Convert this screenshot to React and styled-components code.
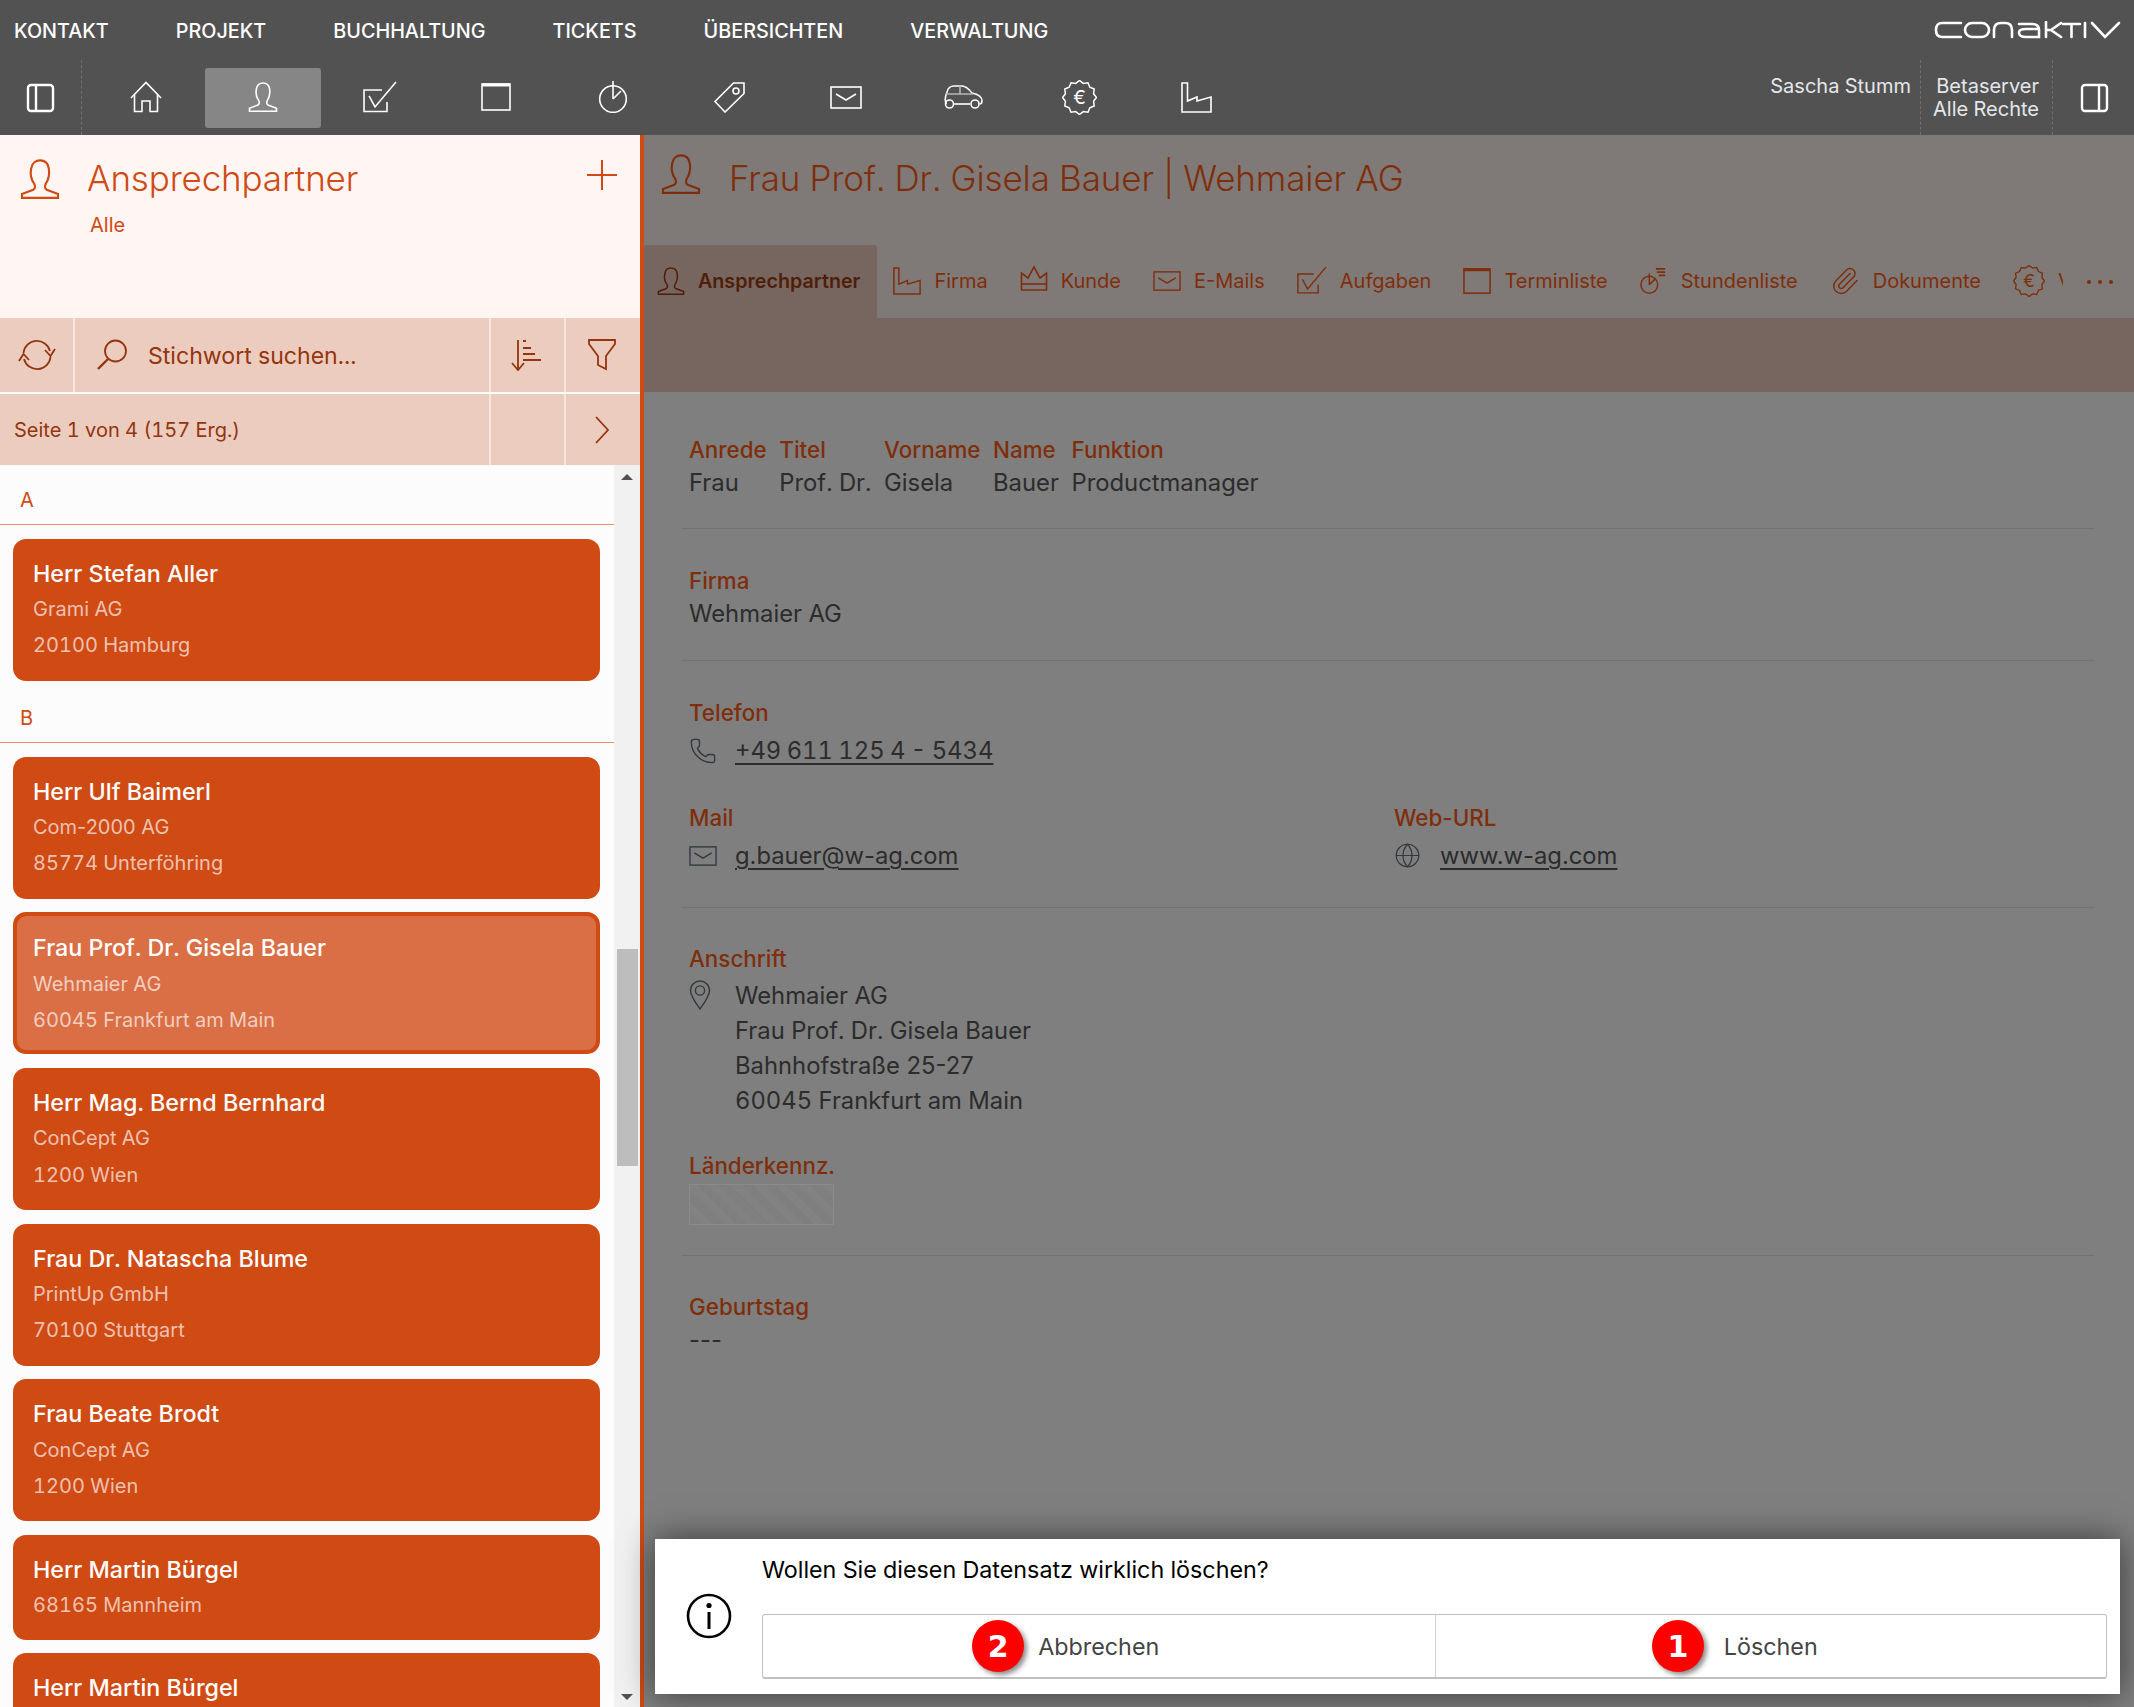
import React from 'react';
import styled, {createGlobalStyle} from 'styled-components';
import {Paperclip, Phone, Globe} from 'lucide-react';

const GlobalStyle = createGlobalStyle`
  html, body {
    margin: 0;
    padding: 0;
    background: #7f7f7f;
  }
  * {
    box-sizing: border-box;
  }
  body {
    font-family: Inter, "Noto Sans", "Liberation Sans", sans-serif;
    font-variant-numeric: tabular-nums;
  }
`;

const ORANGE = '#d04a14';
const DIM_LABEL = '#7f2e0c';

const Page = styled.div`
  width: 100vw;
  height: 100vh;
  display: flex;
  flex-direction: column;
  overflow: hidden;
`;

const Plain = styled.span`
  font-variant-numeric: normal;
`;

/* top bar */
const TopBar = styled.header`
  height: 135px;
  flex: none;
  background: #525252;
  display: flex;
  justify-content: space-between;
  color: #fff;
`;

const TopLeft = styled.div`
  display: flex;
  flex-direction: column;
`;

const TopRight = styled.div`
  display: flex;
  flex-direction: column;
  align-items: flex-end;
`;

const Menu = styled.nav`
  height: 60px;
  padding: 1px 0 0 14px;
  display: flex;
  align-items: center;
  gap: 67px;
`;

const MenuItem = styled.span`
  font-size: 19.8px;
  font-weight: 500;
  color: #fff;
`;

const IconRow = styled.div`
  height: 75px;
  display: flex;
`;

const ToggleCell = styled.div`
  width: 82px;
  height: 75px;
  display: flex;
  align-items: center;
  padding-left: 26px;
  border-right: 1px dashed #6f6f6f;
  margin-right: 6px;
`;

const IconButton = styled.div`
  width: 116.7px;
  height: 60px;
  margin-top: 8px;
  padding-bottom: 2px;
  display: flex;
  align-items: center;
  justify-content: center;
  border-radius: 3px;
  background: ${(p) => (p.$active ? '#868686' : 'transparent')};
`;

const LogoBox = styled.div`
  height: 60px;
  padding: 21px 13px 0 0;
`;

const MetaRow = styled.div`
  height: 75px;
  display: flex;
  font-size: 20px;
  line-height: 23px;
  color: #e4e7ea;
`;

const UserName = styled.div`
  padding: 15px 9px 0 0;
`;

const MetaBlock = styled.div`
  text-align: right;
  padding: 15px 13px 0 12px;
  border-left: 1px dashed #6f6f6f;
  border-right: 1px dashed #6f6f6f;
`;

const RightToggle = styled.div`
  width: 81px;
  padding: 23px 0 0 27px;
  color: #fff;
`;

/* main area */
const Main = styled.main`
  flex: 1;
  min-height: 0;
  display: flex;
`;

const Sidebar = styled.aside`
  width: 644px;
  flex: none;
  display: flex;
  flex-direction: column;
  border-right: 4px solid ${ORANGE};
  background: #fcfcfc;
  min-height: 0;
`;

const SideHeader = styled.div`
  height: 183px;
  flex: none;
  background: #fff5f2;
  color: ${ORANGE};
  padding: 21px 23px 0 20px;
  display: grid;
  grid-template-columns: 67px 1fr 30px;
  grid-template-rows: 45px auto;
  align-content: start;
  align-items: center;
`;

const SideTitle = styled.h1`
  margin: 0;
  font-size: 35px;
  font-weight: 300;
  letter-spacing: -0.15px;
  line-height: 45px;
`;

const PlusSlot = styled.div`
  margin-bottom: 7px;
`;

const SideSub = styled.div`
  grid-column: 2;
  padding: 12px 0 0 3px;
  font-size: 20px;
  line-height: 24px;
`;

const ToolRow = styled.div`
  display: grid;
  grid-template-columns: ${(p) => p.$cols};
  height: ${(p) => p.$h}px;
  flex: none;
  gap: 2px;
  background: #f6e6df;
  margin-bottom: ${(p) => p.$mb || 0}px;
`;

const ToolCell = styled.div`
  background: #ecccbf;
  color: #93350e;
  display: flex;
  align-items: center;
  justify-content: center;
  padding-right: ${(p) => p.$pr || 0}px;
`;

const SearchCell = styled(ToolCell)`
  justify-content: flex-start;
  padding-left: 21px;
  gap: 20px;
  font-size: 23.1px;
`;

const SearchText = styled.span`
  padding-top: 2px;
`;

const PagerCell = styled(ToolCell)`
  justify-content: flex-start;
  padding-left: 14px;
  font-size: 20px;
`;

const ListArea = styled.div`
  flex: 1;
  min-height: 0;
  display: flex;
  overflow: hidden;
`;

const List = styled.div`
  flex: 1;
  display: flex;
  flex-direction: column;
  gap: 13.6px;
  padding-top: 11px;
`;

const GroupHead = styled.div`
  flex: none;
  height: 49px;
  padding: 12px 0 0 20px;
  font-size: 20px;
  line-height: 24px;
  color: ${ORANGE};
  border-bottom: 1px solid #ec8e6d;
`;

const Card = styled.div`
  flex: none;
  margin: 0 14px 0 13px;
  height: ${(p) => (p.$short ? 105 : 142)}px;
  border-radius: 13px;
  background: ${(p) => (p.$selected ? '#da6e44' : ORANGE)};
  border: ${(p) => (p.$selected ? `4px solid ${ORANGE}` : 'none')};
  padding: ${(p) => (p.$selected ? '17px 16px' : '20px 20px')};
`;

const CardName = styled.div`
  font-size: 23.3px;
  font-weight: 500;
  line-height: 30px;
  color: #fff;
`;

const CardLine = styled.div`
  font-size: 20px;
  line-height: 36.3px;
  margin-top: ${(p) => (p.$first ? 2.4 : 0)}px;
  color: rgba(255, 255, 255, 0.68);
`;

const Track = styled.div`
  width: 26px;
  flex: none;
  background: #f1f1f1;
  display: flex;
  flex-direction: column;
  align-items: center;
  padding: 9px 0 7px;
`;

const ArrowUp = styled.div`
  border: 6px solid transparent;
  border-top: 0;
  border-bottom: 6px solid #505050;
`;

const ArrowDown = styled.div`
  border: 6px solid transparent;
  border-bottom: 0;
  border-top: 6px solid #505050;
  margin-top: auto;
`;

const Thumb = styled.div`
  width: 21px;
  height: 217px;
  margin-top: 469px;
  background: #bdbdbd;
`;

/* detail side */
const Detail = styled.section`
  flex: 1;
  min-width: 0;
  position: relative;
  display: flex;
  flex-direction: column;
  background: #7f7f7f;
`;

const DetailHeader = styled.div`
  height: 110px;
  flex: none;
  background: #7f7a77;
  color: ${DIM_LABEL};
  padding: 19px 0 0 17px;
  display: flex;
  align-items: flex-start;
  gap: 28px;
`;

const DetailTitle = styled.h2`
  margin: 2px 0 0;
  font-size: 35px;
  font-weight: 300;
  letter-spacing: -0.12px;
  line-height: 45px;
`;

const TabBar = styled.div`
  height: 73px;
  flex: none;
  background: #7f7a77;
  display: flex;
  align-items: stretch;
`;

const TabStrip = styled.div`
  width: 1419px;
  display: flex;
  overflow: hidden;
`;

const Tab = styled.div`
  flex: none;
  display: flex;
  align-items: center;
  gap: 13px;
  padding: ${(p) => (p.$active ? '0 17px 2px 13px' : '0 16px 2px')};
  font-size: ${(p) => (p.$active ? 19.7 : 20)}px;
  font-weight: ${(p) => (p.$active ? 600 : 400)};
  color: ${(p) => (p.$active ? '#4f1e0a' : DIM_LABEL)};
  background: ${(p) => (p.$active ? '#76665f' : 'transparent')};
  border-radius: 3px 3px 0 0;
`;

const MoreDots = styled.div`
  margin-left: 24px;
  align-self: center;
  color: ${DIM_LABEL};
  display: flex;
  gap: 7px;
`;

const Dot = styled.i`
  width: 4px;
  height: 4px;
  border-radius: 50%;
  background: currentColor;
`;

const Band = styled.div`
  height: 74px;
  flex: none;
  background: #76665f;
`;

const Body = styled.div`
  padding: 7px 40px 0 38px;
`;

const Section = styled.div`
  padding: ${(p) => p.$pt || 36}px 0 ${(p) => p.$pb}px 7px;
  border-bottom: ${(p) => (p.$last ? 'none' : '1px solid #737373')};
`;

const NameGrid = styled.div`
  display: inline-grid;
  grid-template-columns: repeat(5, auto);
  column-gap: 12.6px;
`;

const Label = styled.div`
  font-size: 22.4px;
  font-weight: 500;
  line-height: 30px;
  color: ${DIM_LABEL};
`;

const Value = styled.div`
  font-size: 23.8px;
  line-height: 35px;
  color: #2c2c2c;
`;

const ContactGrid = styled.div`
  display: grid;
  grid-template-columns: 705px 1fr;
`;

const ContactRow = styled.div`
  display: flex;
  align-items: center;
  margin: 5px 0 ${(p) => p.$mb || 0}px;
`;

const IconSlot = styled.div`
  width: 46px;
  flex: none;
  display: flex;
  color: #33393c;
`;

const ValueLink = styled.a`
  font-size: 23.8px;
  line-height: 35px;
  color: #2c2c2c;
  word-spacing: ${(p) => p.$ws || 0}px;
  text-decoration: underline;
  text-underline-offset: 4px;
`;

const AddressRow = styled.div`
  display: flex;
  align-items: flex-start;
  margin: 4px 0 33px;
`;

const PinSlot = styled(IconSlot)`
  padding-top: 2px;
`;

const HatchBox = styled.div`
  width: 145px;
  height: 41px;
  margin-top: 3px;
  border: 1px solid #8a8a8a;
  background: repeating-linear-gradient(45deg, #7f7f7f 0 8px, #828282 8px 16px);
`;

/* confirmation dialog */
const Dialog = styled.div`
  position: absolute;
  left: 11px;
  right: 14px;
  bottom: 13px;
  height: 155px;
  background: #fff;
  box-shadow: 0 0 32px rgba(0, 0, 0, 0.55);
  display: flex;
  padding: 0 13px 0 31px;
`;

const InfoSlot = styled.div`
  width: 76px;
  flex: none;
  padding-top: 54px;
  color: #000;
`;

const DialogMain = styled.div`
  flex: 1;
  display: flex;
  flex-direction: column;
`;

const Question = styled.div`
  font-size: 23.3px;
  line-height: 30px;
  padding-top: 16px;
  color: #000;
`;

const ButtonGroup = styled.div`
  margin-top: 29px;
  height: 65px;
  display: grid;
  grid-template-columns: 1fr 1fr;
  border: 1px solid #c0c0c0;
  border-bottom-width: 2px;
  border-radius: 3px;
`;

const DialogButton = styled.div`
  display: flex;
  align-items: center;
  justify-content: center;
  font-size: 23.3px;
  color: #444;
  border-left: ${(p) => (p.$divided ? '1px solid #d0d0d0' : 'none')};
`;

const ButtonLabel = styled.span`
  position: relative;
`;

const Badge = styled.span`
  position: absolute;
  right: 100%;
  top: 50%;
  margin-right: ${(p) => p.$gap}px;
  width: 52px;
  height: 52px;
  margin-top: -26px;
  border-radius: 50%;
  background: #f00;
  color: #fff;
  font-family: "DejaVu Sans", sans-serif;
  font-size: 30px;
  font-weight: 700;
  display: flex;
  align-items: center;
  justify-content: center;
  box-shadow: 3px 3px 5px rgba(0, 0, 0, 0.45);
`;

/* icons */
const Ico = ({w, h, vw, vh, sw = 1.6, children}) => (
  <svg
    width={w}
    height={h}
    viewBox={`0 0 ${vw || w} ${vh || h}`}
    fill="none"
    stroke="currentColor"
    strokeWidth={sw}
    style={{display: 'block', flex: 'none'}}
  >
    {children}
  </svg>
);

const UserIcon = ({s = 30, sw}) => (
  <Ico w={s} h={s} vw={30} vh={30} sw={sw}>
    <path d="M1.5 29.2V26.2L10 23C11.6 22 11.6 20.4 10.6 18.4C8 15 7.6 11 8.4 7C9 3 12 1 15 1C18.4 1 21 3 21.6 7C22.2 11 21.6 15 19.4 18.4C18.4 20.4 18.4 22 20 23L28.5 26.2V29.2Z" />
  </Ico>
);

const HomeIcon = () => (
  <Ico w={32} h={32}>
    <path d="M1 17L16 1.5L31 17" />
    <path d="M4.5 13.5V30.5H12V20H20V30.5H27.5V13.5" />
  </Ico>
);

const CheckIcon = ({s = 34, sw}) => (
  <Ico w={s} h={s * 0.94} vw={34} vh={32} sw={sw}>
    <path d="M19 9H1V30.5H24V21" />
    <path d="M6 15L12 26L33 1" />
  </Ico>
);

const CalendarIcon = ({s = 30}) => (
  <Ico w={s} h={s} vw={30} vh={30}>
    <rect x="1" y="2" width="28" height="26" />
    <path d="M1 3H29" strokeWidth="3" />
  </Ico>
);

const WatchIcon = ({s = 30}) => (
  <Ico w={s} h={s * 1.07} vw={30} vh={32}>
    <circle cx="15" cy="18" r="13.3" />
    <path d="M15 0V18M15 18L23 10" />
  </Ico>
);

const WatchListIcon = ({s = 30}) => (
  <Ico w={s} h={s} vw={30} vh={30}>
    <circle cx="10" cy="19" r="9" />
    <path d="M10 7V19M10 19L16 13" />
    <path d="M17 2H27M18 5.5H27M20 9H27" strokeWidth="1.8" />
  </Ico>
);

const TagIcon = () => (
  <Ico w={31} h={31}>
    <path d="M1 19.5L19.5 1H30V11.5L11 30Z" />
    <circle cx="22" cy="9" r="3" />
  </Ico>
);

const MailIcon = ({w = 32, h = 23}) => (
  <Ico w={w} h={h} vw={32} vh={23}>
    <rect x="1" y="1" width="30" height="21" />
    <path d="M6 8L16 14L26 8" />
  </Ico>
);

const CarIcon = () => (
  <Ico w={39} h={24}>
    <path d="M2.5 19C1 17 1 12 3 7C4 3 6 1 10 1H18C21 1 24 3 28 8C33 9 38 11 38 16C38 18 37 19 35.5 19" />
    <path d="M10 19H26" />
    <circle cx="5.5" cy="19" r="4" />
    <circle cx="31" cy="19" r="4" />
    <path d="M2 9H29M16 1V9" stroke="#b5b5b5" />
  </Ico>
);

const badgePoints = Array.from({length: 24}, (_, i) => {
  const a = (i / 24) * Math.PI * 2;
  const r = i % 2 ? 14.6 : 17;
  return `${(17.5 + r * Math.sin(a)).toFixed(1)},${(17.5 - r * Math.cos(a)).toFixed(1)}`;
}).join(' ');

const EuroIcon = ({s = 35}) => (
  <Ico w={s} h={s} vw={35} vh={35} sw={1.5}>
    <polygon points={badgePoints} />
    <text x="17.5" y="24" textAnchor="middle" fontSize="19" stroke="none" fill="currentColor" fontFamily="Inter, sans-serif">
      €
    </text>
  </Ico>
);

const FactoryIcon = ({s = 31}) => (
  <Ico w={s} h={s} vw={31} vh={31}>
    <path d="M1 1H6.5V19L16 15V19L30 15V30H1Z" />
  </Ico>
);

const CrownSlot = styled.div`
  margin-bottom: 4px;
`;

const CrownIcon = () => (
  <CrownSlot>
    <Ico w={28} h={27} vw={28} vh={27}>
      <path d="M1.5 25V8L8 13L14 2L20 13L26.5 8V25Z" />
      <path d="M1.5 19H26.5" />
    </Ico>
  </CrownSlot>
);

const PanelIcon = ({split}) => (
  <Ico w={29} h={30} sw={2.4}>
    <rect x="2" y="2" width="25" height="26" rx="3" />
    <path d={`M${split} 2V28`} />
  </Ico>
);

const RefreshIcon = () => (
  <Ico w={38} h={34} sw={1.8}>
    <path d="M5.5 15A13.5 13.5 0 0 1 32 13" />
    <path d="M27 12L32.5 18L37 11" />
    <path d="M32.5 19A13.5 13.5 0 0 1 6 21" />
    <path d="M1 23L5.5 16L11 22" />
  </Ico>
);

const SearchIcon = () => (
  <Ico w={32} h={32} sw={1.8}>
    <circle cx="19.5" cy="12" r="10.5" />
    <path d="M12 20L2 30" strokeWidth="2.4" />
  </Ico>
);

const SortIcon = () => (
  <Ico w={30} h={32} sw={1.8}>
    <path d="M7 1V30M1 24L7 31L13 24" />
    <path d="M12 2H15M12 9H20M12 15H24M12 21H30" />
  </Ico>
);

const FilterIcon = () => (
  <Ico w={28} h={32} sw={1.8}>
    <path d="M1 1H27V5L18 17V30L10 26V17L1 5Z" />
  </Ico>
);

const ChevronIcon = () => (
  <Ico w={16} h={28} sw={1.8}>
    <path d="M2 1L14 14L2 27" />
  </Ico>
);

const PlusIcon = () => (
  <Ico w={30} h={30} sw={2}>
    <path d="M15 0V30M0 15H30" />
  </Ico>
);

const PinIcon = () => (
  <Ico w={22} h={30} sw={1.4}>
    <path d="M11 29C6 22 1.5 16 1.5 10.5C1.5 5 6 1 11 1C16 1 20.5 5 20.5 10.5C20.5 16 16 22 11 29Z" />
    <circle cx="11" cy="10.5" r="4.6" />
  </Ico>
);

const InfoIcon = () => (
  <Ico w={46} h={46} sw={2.6}>
    <circle cx="23" cy="23" r="21" />
    <circle cx="23" cy="12.5" r="2.6" fill="currentColor" stroke="none" />
    <path d="M23 19V36" strokeWidth="3" />
  </Ico>
);

const Logo = () => (
  <svg width="187" height="18" viewBox="0 0 187 18" fill="none" stroke="#fff" strokeWidth="2.6" strokeLinecap="round" style={{display: 'block'}}>
    <path d="M27 2H8Q2 2 2 9Q2 16 8 16H27" />
    <rect x="31" y="2" width="24" height="14" rx="7" />
    <path d="M60 16V9Q60 2 67 2H71Q78 2 78 9V16" />
    <path d="M85 3H98Q105 3 105 9V16H92Q85 16 85 11.5Q85 8 92 8H105" />
    <path d="M112 1V16M112 9H117L127 2M117 9L127 16" />
    <path d="M129 3H146M137.5 3V16" />
    <path d="M151 2V16" />
    <path d="M158 2L171 16L185 2" />
  </svg>
);

const menu = ['KONTAKT', 'PROJEKT', 'BUCHHALTUNG', 'TICKETS', 'ÜBERSICHTEN', 'VERWALTUNG'];

const navIcons = [
  <HomeIcon key="home" />,
  <UserIcon key="user" />,
  <CheckIcon key="check" />,
  <CalendarIcon key="cal" />,
  <WatchIcon key="watch" />,
  <TagIcon key="tag" />,
  <MailIcon key="mail" />,
  <CarIcon key="car" />,
  <EuroIcon key="euro" />,
  <FactoryIcon key="factory" />,
];

const tabs = [
  {label: 'Ansprechpartner', icon: <UserIcon s={28} />, active: true},
  {label: 'Firma', icon: <FactoryIcon s={28} />},
  {label: 'Kunde', icon: <CrownIcon />},
  {label: <Plain>E-Mails</Plain>, icon: <MailIcon w={28} h={20} />},
  {label: 'Aufgaben', icon: <CheckIcon s={30} />},
  {label: 'Terminliste', icon: <CalendarIcon s={28} />},
  {label: 'Stundenliste', icon: <WatchListIcon s={28} />},
  {label: 'Dokumente', icon: <Paperclip size={30} strokeWidth={1.2} />},
  {label: 'Verträge', icon: <EuroIcon s={32} />},
];

const people = [
  {head: 'A'},
  {name: 'Herr Stefan Aller', lines: ['Grami AG', '20100 Hamburg']},
  {head: 'B'},
  {name: 'Herr Ulf Baimerl', lines: ['Com-2000 AG', '85774 Unterföhring']},
  {name: 'Frau Prof. Dr. Gisela Bauer', lines: ['Wehmaier AG', '60045 Frankfurt am Main'], selected: true},
  {name: 'Herr Mag. Bernd Bernhard', lines: ['ConCept AG', '1200 Wien']},
  {name: 'Frau Dr. Natascha Blume', lines: ['PrintUp GmbH', '70100 Stuttgart']},
  {name: 'Frau Beate Brodt', lines: ['ConCept AG', '1200 Wien']},
  {name: 'Herr Martin Bürgel', lines: ['68165 Mannheim'], short: true},
  {name: 'Herr Martin Bürgel', lines: ['68165 Mannheim']},
];

const nameColumns = [
  ['Anrede', 'Frau'],
  ['Titel', 'Prof. Dr.'],
  ['Vorname', 'Gisela'],
  ['Name', 'Bauer'],
  ['Funktion', 'Productmanager'],
];

const App = function () {
  return (
    <Page>
      <GlobalStyle />
      <TopBar>
        <TopLeft>
          <Menu>
            {menu.map((m) => (
              <MenuItem key={m}>{m}</MenuItem>
            ))}
          </Menu>
          <IconRow>
            <ToggleCell>
              <PanelIcon split={10} />
            </ToggleCell>
            {navIcons.map((icon, i) => (
              <IconButton key={i} $active={i === 1}>
                {icon}
              </IconButton>
            ))}
          </IconRow>
        </TopLeft>
        <TopRight>
          <LogoBox>
            <Logo />
          </LogoBox>
          <MetaRow>
            <UserName>Sascha Stumm</UserName>
            <MetaBlock>
              Betaserver
              <br />
              Alle Rechte
            </MetaBlock>
            <RightToggle>
              <PanelIcon split={19} />
            </RightToggle>
          </MetaRow>
        </TopRight>
      </TopBar>

      <Main>
        <Sidebar>
          <SideHeader>
            <UserIcon s={40} />
            <SideTitle>Ansprechpartner</SideTitle>
            <PlusSlot>
              <PlusIcon />
            </PlusSlot>
            <SideSub>Alle</SideSub>
          </SideHeader>
          <ToolRow $cols="73px 1fr 73px 74px" $h={74} $mb={2}>
            <ToolCell>
              <RefreshIcon />
            </ToolCell>
            <SearchCell>
              <SearchIcon />
              <SearchText>Stichwort suchen...</SearchText>
            </SearchCell>
            <ToolCell $pr={3}>
              <SortIcon />
            </ToolCell>
            <ToolCell $pr={3}>
              <FilterIcon />
            </ToolCell>
          </ToolRow>
          <ToolRow $cols="1fr 73px 74px" $h={71}>
            <PagerCell>Seite 1 von 4 (157 Erg.)</PagerCell>
            <ToolCell />
            <ToolCell $pr={3}>
              <ChevronIcon />
            </ToolCell>
          </ToolRow>
          <ListArea>
            <List>
              {people.map((p, i) =>
                p.head ? (
                  <GroupHead key={i}>{p.head}</GroupHead>
                ) : (
                  <Card key={i} $selected={p.selected} $short={p.short}>
                    <CardName>{p.name}</CardName>
                    {p.lines.map((l, j) => (
                      <CardLine key={l} $first={j === 0}>
                        {l.includes('-') ? <Plain>{l}</Plain> : l}
                      </CardLine>
                    ))}
                  </Card>
                )
              )}
            </List>
            <Track>
              <ArrowUp />
              <Thumb />
              <ArrowDown />
            </Track>
          </ListArea>
        </Sidebar>

        <Detail>
          <DetailHeader>
            <UserIcon s={40} />
            <DetailTitle>Frau Prof. Dr. Gisela Bauer | Wehmaier AG</DetailTitle>
          </DetailHeader>
          <TabBar>
            <TabStrip>
              {tabs.map((t, i) => (
                <Tab key={i} $active={t.active}>
                  {t.icon}
                  {t.label}
                </Tab>
              ))}
            </TabStrip>
            <MoreDots>
              <Dot />
              <Dot />
              <Dot />
            </MoreDots>
          </TabBar>
          <Band />
          <Body>
            <Section $pb={28}>
              <NameGrid>
                {nameColumns.map(([l]) => (
                  <Label key={l}>{l}</Label>
                ))}
                {nameColumns.map(([, v]) => (
                  <Value key={v}>{v}</Value>
                ))}
              </NameGrid>
            </Section>
            <Section $pt={37} $pb={29}>
              <Label>Firma</Label>
              <Value>Wehmaier AG</Value>
            </Section>
            <Section $pt={37} $pb={34}>
              <Label>Telefon</Label>
              <ContactRow $mb={35}>
                <IconSlot>
                  <Phone size={28} strokeWidth={1.2} />
                </IconSlot>
                <ValueLink $ws={-1}>+49 611 125 4 - 5434</ValueLink>
              </ContactRow>
              <ContactGrid>
                <div>
                  <Label>Mail</Label>
                  <ContactRow>
                    <IconSlot>
                      <MailIcon w={28} h={20} />
                    </IconSlot>
                    <ValueLink>
                      <Plain>g.bauer@w-ag.com</Plain>
                    </ValueLink>
                  </ContactRow>
                </div>
                <div>
                  <Label>
                    <Plain>Web-URL</Plain>
                  </Label>
                  <ContactRow>
                    <IconSlot>
                      <Globe size={27} strokeWidth={1.1} />
                    </IconSlot>
                    <ValueLink>
                      <Plain>www.w-ag.com</Plain>
                    </ValueLink>
                  </ContactRow>
                </div>
              </ContactGrid>
            </Section>
            <Section $pb={30}>
              <Label>Anschrift</Label>
              <AddressRow>
                <PinSlot>
                  <PinIcon />
                </PinSlot>
                <div>
                  <Value>Wehmaier AG</Value>
                  <Value>Frau Prof. Dr. Gisela Bauer</Value>
                  <Value>
                    <Plain>Bahnhofstraße 25-27</Plain>
                  </Value>
                  <Value>60045 Frankfurt am Main</Value>
                </div>
              </AddressRow>
              <Label>Länderkennz.</Label>
              <HatchBox />
            </Section>
            <Section $pb={0} $last>
              <Label>Geburtstag</Label>
              <Value>
                <Plain>---</Plain>
              </Value>
            </Section>
          </Body>

          <Dialog>
            <InfoSlot>
              <InfoIcon />
            </InfoSlot>
            <DialogMain>
              <Question>Wollen Sie diesen Datensatz wirklich löschen?</Question>
              <ButtonGroup>
                <DialogButton>
                  <ButtonLabel>
                    <Badge $gap={14}>2</Badge>
                    Abbrechen
                  </ButtonLabel>
                </DialogButton>
                <DialogButton $divided>
                  <ButtonLabel>
                    <Badge $gap={20}>1</Badge>
                    Löschen
                  </ButtonLabel>
                </DialogButton>
              </ButtonGroup>
            </DialogMain>
          </Dialog>
        </Detail>
      </Main>
    </Page>
  );
};

export default App;
